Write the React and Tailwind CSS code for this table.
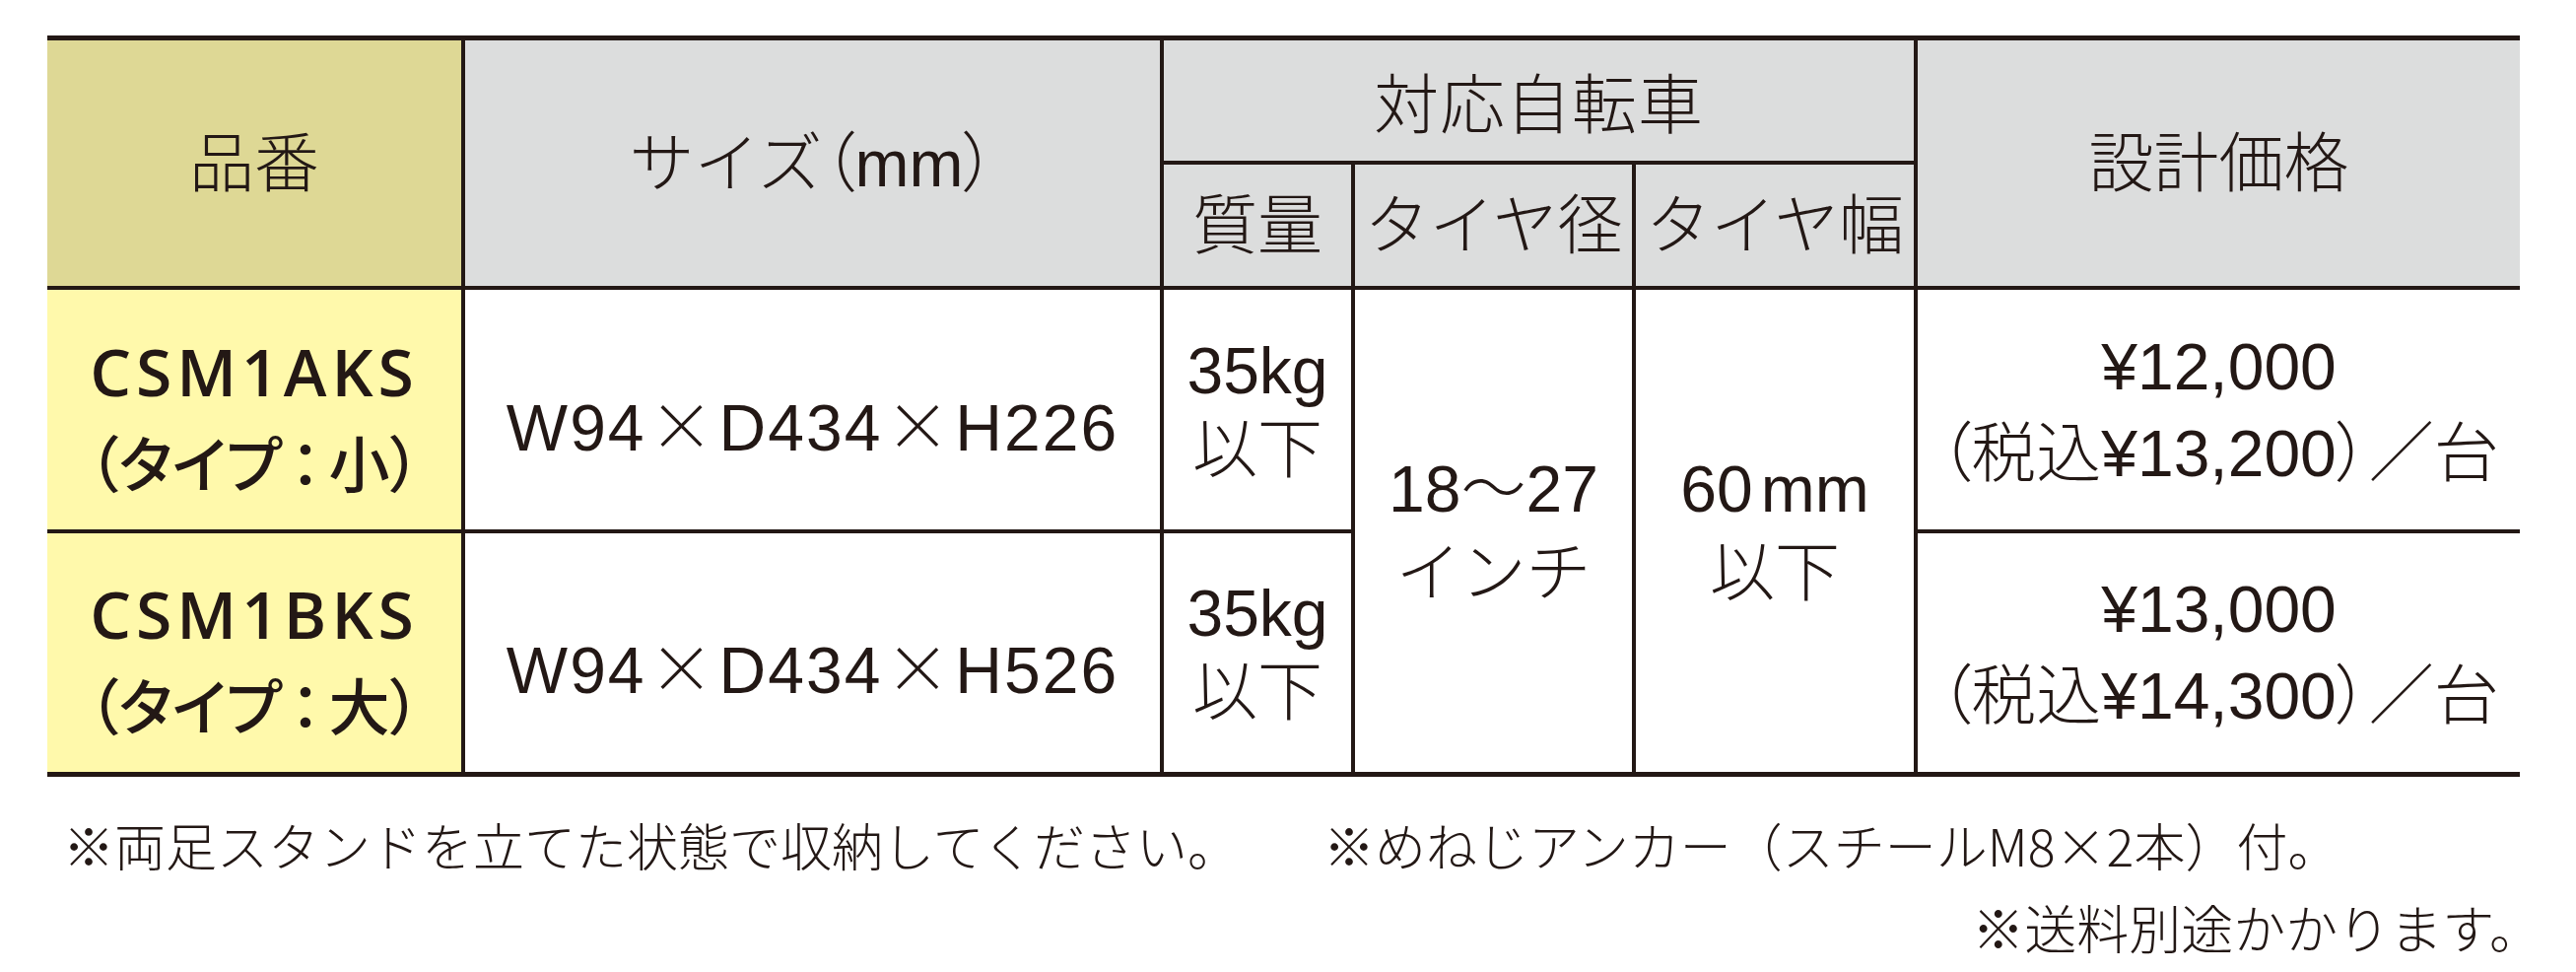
import React from "react";

const ink = "text-[#231815]";
const cell = "flex flex-col items-center justify-center text-center";
const palt = "[font-feature-settings:'palt']";

const Times = () => (
  <span className="font-['Noto_Sans_CJK_JP',sans-serif] mx-[3px]">×</span>
);

const products = [
  {
    code: "CSM1AKS",
    type: "小",
    height: "226",
    price: "12,000",
    tax: "13,200",
    row: "row-start-3",
  },
  {
    code: "CSM1BKS",
    type: "大",
    height: "526",
    price: "13,000",
    tax: "14,300",
    row: "row-start-4",
  },
];

const App = () => {
  return (
    <div
      className={`w-[2614px] min-h-[986px] bg-white pt-[36px] pl-[48px] ${ink} font-light font-['Liberation_Sans','Noto_Sans_CJK_JP',sans-serif]`}
    >
      <div className="w-[2509px] grid grid-cols-[420px_705px_190px_281px_282px_611px] grid-rows-[122px_123px_243px_242px] gap-[4px] bg-[#231815] border-y-[5px] border-[#231815]">
        {/* header */}
        <div className={`${cell} col-start-1 row-start-1 row-span-2 bg-[#ded895] text-[66px] leading-none`}>
          品番
        </div>
        <div className={`${cell} col-start-2 row-start-1 row-span-2 bg-[#dcdddd] text-[66px] leading-none`}>
          <span>
            サイズ<span className={palt}>（</span>mm<span className={palt}>）</span>
          </span>
        </div>
        <div className={`${cell} col-start-3 col-span-3 row-start-1 bg-[#dcdddd] text-[66px] leading-none pt-[10px] tracking-[1px]`}>
          対応自転車
        </div>
        <div className={`${cell} col-start-6 row-start-1 row-span-2 bg-[#dcdddd] text-[66px] leading-none`}>
          設計価格
        </div>
        <div className={`${cell} col-start-3 row-start-2 bg-[#dcdddd] text-[66px] leading-none`}>
          質量
        </div>
        <div className={`${cell} col-start-4 row-start-2 bg-[#dcdddd] text-[66px] leading-none`}>
          タイヤ径
        </div>
        <div className={`${cell} col-start-5 row-start-2 bg-[#dcdddd] text-[66px] leading-none`}>
          タイヤ幅
        </div>

        {/* body rows */}
        {products.map((p) => (
          <React.Fragment key={p.code}>
            <div className={`${cell} col-start-1 ${p.row} bg-[#fff9ab] pt-[12px]`}>
              <p className="font-['Open_Sans',sans-serif] font-semibold text-[66px] leading-[92px] tracking-[5px]">
                {p.code}
              </p>
              <p className={`font-['Noto_Sans_CJK_JP',sans-serif] font-medium text-[62px] leading-[92px] ${palt}`}>
                （タイプ<span className="mx-[8px]">：</span>{p.type}）
              </p>
            </div>
            <div className={`${cell} col-start-2 ${p.row} bg-white text-[66px] leading-none pt-[30px]`}>
              <span className="tracking-[2px]">
                W94<Times />D434<Times />H{p.height}
              </span>
            </div>
            <div className={`${cell} col-start-3 ${p.row} bg-white text-[66px] leading-[80px]`}>
              <p>35kg</p>
              <p>以下</p>
            </div>
            <div className={`${cell} col-start-6 ${p.row} bg-white text-[66px] leading-[88px]`}>
              <p>¥{p.price}</p>
              <p className={palt}>（税込¥{p.tax}）／台</p>
            </div>
          </React.Fragment>
        ))}
        <div className={`${cell} col-start-4 row-start-3 row-span-2 bg-white text-[66px] leading-[85px]`}>
          <p>18～27</p>
          <p>インチ</p>
        </div>
        <div className={`${cell} col-start-5 row-start-3 row-span-2 bg-white text-[66px] leading-[85px]`}>
          <p>
            60<span className="ml-[8px]">mm</span>
          </p>
          <p>以下</p>
        </div>
      </div>

      {/* notes */}
      <div className="w-[2509px] font-['Noto_Sans_CJK_JP',sans-serif] text-[52px] leading-[78px]">
        <div className="flex mt-[30px] pl-[16px]">
          <span>※両足スタンドを立てた状態で収納してください。</span>
          <span className="ml-[86px]">※めねじアンカー（スチールM8×2本）付。</span>
        </div>
        <p className="text-right mt-[5px] -mr-[22px] text-[53px]">※送料別途かかります。</p>
      </div>
    </div>
  );
};

export default App;
